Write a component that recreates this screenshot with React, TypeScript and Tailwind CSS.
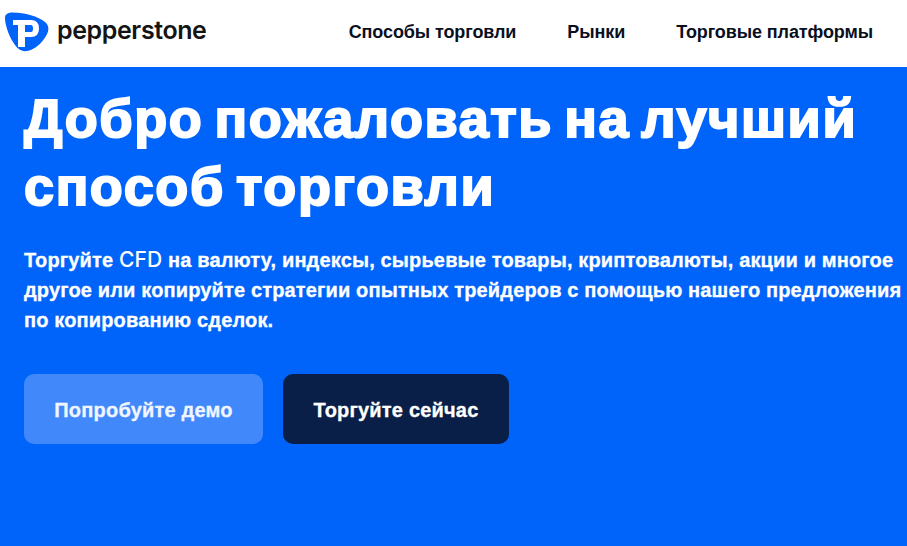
export default function App() {
  return (
    <div className="w-[907px] h-[546px] overflow-hidden bg-[#0064fa] font-['Liberation_Sans',sans-serif] flex flex-col">
      <header className="h-[67px] shrink-0 bg-white flex items-center justify-between pl-[5px] pr-[34px]">
        <div className="flex items-center gap-[8px]">
          <svg width="44" height="40" viewBox="0 0 44 40" className="-mt-[3px]">
            <path d="M6 .5C18 0 33 4 40 10C46 15 43 22 39 27C34 34 28 38 22 39C15 40 11 35 8 30C3 22 0 12 0 6C0 2 3 1 6 .5Z" fill="#0064fa" />
            <path fillRule="evenodd" d="M8 8H26Q34 8 34 16.5Q34 25 26 25H20V35H13V13H8ZM20 13H26Q28 13 28 16.5Q28 20 26 20H20Z" fill="#fff" />
          </svg>
          <span className="font-['Inter',sans-serif] text-[25px] font-semibold tracking-[-0.4px] text-[#141414] -mt-[5px]">pepperstone</span>
        </div>
        <nav className="flex gap-[51px] text-[18px] font-bold tracking-[-0.1px] text-[#0a0f1e] -mt-[3px]">
          <span>Способы торговли</span>
          <span>Рынки</span>
          <span>Торговые платформы</span>
        </nav>
      </header>
      <main className="px-[24px] text-white">
        <h1 className="mt-[17px] text-[54px] leading-[68px] font-bold tracking-[1.6px] [word-spacing:-5.5px] [-webkit-text-stroke:2px_white]">Добро пожаловать на лучший<br />способ торговли</h1>
        <p className="mt-[25px] text-[20px] leading-[30px] font-bold tracking-[0.15px] w-[880px] [-webkit-text-stroke:0.3px_white]">Торгуйте <span className="font-['Inter',sans-serif] text-[21px] leading-[20px] font-medium [-webkit-text-stroke:0]">CFD</span> на валюту, индексы, сырьевые товары, криптовалюты, акции и многое другое или копируйте стратегии опытных трейдеров с помощью нашего предложения по копированию сделок.</p>
        <div className="mt-[39px] flex gap-[20px]">
          <button className="w-[239px] h-[70px] pt-[1px] rounded-[10px] bg-[#4189fb] text-[20px] font-bold tracking-[0.2px] text-[#f0f5ff] [-webkit-text-stroke:0.3px_#f0f5ff]">Попробуйте демо</button>
          <button className="w-[226px] h-[70px] pt-[1px] rounded-[10px] bg-[#0a1f47] text-[20px] font-bold tracking-[0.2px] text-white [-webkit-text-stroke:0.3px_white]">Торгуйте сейчас</button>
        </div>
      </main>
    </div>
  );
}
